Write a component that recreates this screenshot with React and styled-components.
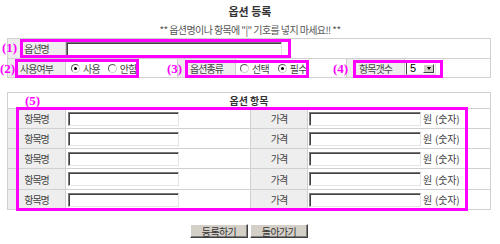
import React from 'react';
import styled, { createGlobalStyle } from 'styled-components';

const GlobalStyle = createGlobalStyle`
  body {
    margin: 0;
    background: #fff;
    font-family: "Noto Sans CJK KR", "Noto Sans", sans-serif;
    color: #444;
  }
`;

const Page = styled.div`
  position: relative;
  width: 500px;
  height: 244px;
  overflow: hidden;
`;

const Title = styled.h1`
  margin: 0;
  height: 22px;
  line-height: 22px;
  text-align: center;
  font-size: 11px;
  font-weight: bold;
  color: #333;
`;

const Notice = styled.p`
  margin: 0;
  height: 16px;
  line-height: 16px;
  text-align: center;
  font-size: 10px;
  letter-spacing: -0.6px;
  color: #555;
`;

const Grid = styled.div`
  display: grid;
  grid-template-columns: ${p => p.$cols};
  grid-template-rows: ${p => p.$rows};
  gap: 1px;
  padding: 1px;
  width: 484px;
  box-sizing: border-box;
  margin: ${p => p.$top || 0}px 0 0 7px;
  background: #d0d0d0;
`;

const Label = styled.div`
  display: flex;
  align-items: center;
  justify-content: center;
  background: #eeeeee;
  font-size: 10px;
  letter-spacing: -1px;
  color: #444;
`;

const Field = styled.div`
  display: flex;
  align-items: center;
  padding-left: ${p => p.$pad || 0}px;
  background: #fff;
  grid-column: span ${p => p.$span || 1};
  font-size: 10px;
  letter-spacing: -0.8px;
  color: #444;
`;

const Header = styled.div`
  grid-column: 1 / -1;
  display: flex;
  align-items: center;
  justify-content: center;
  background: #fff;
  font-size: 10px;
  font-weight: bold;
  color: #333;
`;

const TextBox = styled.input`
  width: ${p => p.$w}px;
  height: 14px;
  box-sizing: border-box;
  margin: 0;
  padding: 0 2px;
  border: 1px solid;
  border-color: #7a7a7a #e4e4e4 #e4e4e4 #7a7a7a;
  box-shadow: inset 1px 1px 0 #404040;
  background: #fff;
  outline: none;
`;

const Unit = styled.span`
  margin-left: 2px;
  letter-spacing: -0.2px;
  word-spacing: 1px;
`;

const RadioOption = styled.label`
  display: inline-flex;
  align-items: center;
  gap: 3px;
  margin-right: ${p => p.$gap || 0}px;
`;

const RadioCircle = styled.span`
  position: relative;
  width: 9px;
  height: 9px;
  box-sizing: border-box;
  border-radius: 50%;
  border: 1px solid;
  border-color: #5a5a5a #d4d0c8 #d4d0c8 #5a5a5a;
  background: #fff;

  &::after {
    content: '';
    display: ${p => (p.$checked ? 'block' : 'none')};
    position: absolute;
    left: 2px;
    top: 2px;
    width: 3px;
    height: 3px;
    border-radius: 50%;
    background: #000;
  }
`;

const SelectBox = styled.div`
  display: flex;
  align-items: center;
  justify-content: space-between;
  width: 30px;
  height: 13px;
  box-sizing: border-box;
  padding: 0 1px 0 3px;
  border: 1px solid;
  border-color: #404040 #e4e4e4 #e4e4e4 #404040;
  background: #fff;
  font-family: "Liberation Sans", Arial, sans-serif;
  font-size: 11px;
  color: #000;
`;

const DropButton = styled.span`
  display: flex;
  align-items: center;
  justify-content: center;
  width: 11px;
  height: 9px;
  box-sizing: border-box;
  background: #d4d0c8;
  border: 1px solid;
  border-color: #fff #404040 #404040 #fff;

  &::before {
    content: '';
    border-left: 2px solid transparent;
    border-right: 2px solid transparent;
    border-top: 3px solid #000;
  }
`;

const ButtonRow = styled.div`
  display: flex;
  justify-content: center;
  gap: 2px;
  margin-top: 14px;
  padding-right: 2px;
`;

const Button = styled.button`
  width: 58px;
  height: 14px;
  box-sizing: border-box;
  margin: 0;
  padding: 0;
  background: #d4d0c8;
  border: 1px solid;
  border-color: #fff #404040 #404040 #fff;
  box-shadow: inset -1px -1px 0 #808080;
  font-family: "Noto Sans CJK KR", sans-serif;
  font-size: 10px;
  line-height: 11px;
  letter-spacing: -0.6px;
  color: #333;
`;

const Mark = styled.div`
  position: absolute;
  left: ${p => p.$x}px;
  top: ${p => p.$y}px;
  width: ${p => p.$w}px;
  height: ${p => p.$h}px;
  box-sizing: border-box;
  border: 3px solid #ff00ff;
  pointer-events: none;
`;

const Tag = styled.span`
  position: absolute;
  left: ${p => p.$x}px;
  top: ${p => p.$y}px;
  font-family: "Liberation Serif", "Times New Roman", serif;
  font-size: 13px;
  font-weight: bold;
  line-height: 13px;
  color: #ff00ff;
`;

const Radio = ({ checked, children, gap }) => (
  <RadioOption $gap={gap}>
    <RadioCircle $checked={checked} />
    {children}
  </RadioOption>
);

const items = [1, 2, 3, 4, 5];

export default function App() {
  return (
    <Page>
      <GlobalStyle />
      <Title>옵션 등록</Title>
      <Notice>** 옵션명이나 항목에 "|" 기호를 넣지 마세요!! **</Notice>

      <Grid $cols="57px 111px 57px 110px 57px 85px" $rows="19px 18px">
        <Label>옵션명</Label>
        <Field $span={5}>
          <TextBox $w={216} />
        </Field>

        <Label>사용여부</Label>
        <Field $pad={5}>
          <Radio checked gap={8}>사용</Radio>
          <Radio>안함</Radio>
        </Field>
        <Label>옵션종류</Label>
        <Field $pad={4}>
          <Radio gap={9}>선택</Radio>
          <Radio checked>필수</Radio>
        </Field>
        <Label>항목갯수</Label>
        <Field $pad={1}>
          <SelectBox>
            5
            <DropButton />
          </SelectBox>
        </Field>
      </Grid>

      <Grid $top={14} $cols="57px 184px 56px 182px" $rows="15px 19px 19px 19px 20px 19px">
        <Header>옵션 항목</Header>
        {items.map(n => (
          <React.Fragment key={n}>
            <Label>항목명</Label>
            <Field $pad={2}>
              <TextBox $w={111} />
            </Field>
            <Label>가격</Label>
            <Field $pad={1}>
              <TextBox $w={112} />
              <Unit>원 (숫자)</Unit>
            </Field>
          </React.Fragment>
        ))}
      </Grid>

      <ButtonRow>
        <Button type="button">등록하기</Button>
        <Button type="button">돌아가기</Button>
      </ButtonRow>

      <Tag $x={2} $y={41}>(1)</Tag>
      <Tag $x={0} $y={62}>(2)</Tag>
      <Tag $x={167} $y={62}>(3)</Tag>
      <Tag $x={333} $y={62}>(4)</Tag>
      <Tag $x={25} $y={94}>(5)</Tag>

      <Mark $x={20} $y={39} $w={271} $h={19} />
      <Mark $x={15} $y={59} $w={124} $h={19} />
      <Mark $x={185} $y={60} $w={124} $h={18} />
      <Mark $x={353} $y={60} $w={90} $h={18} />
      <Mark $x={16} $y={107} $w={452} $h={104} />
    </Page>
  );
}
